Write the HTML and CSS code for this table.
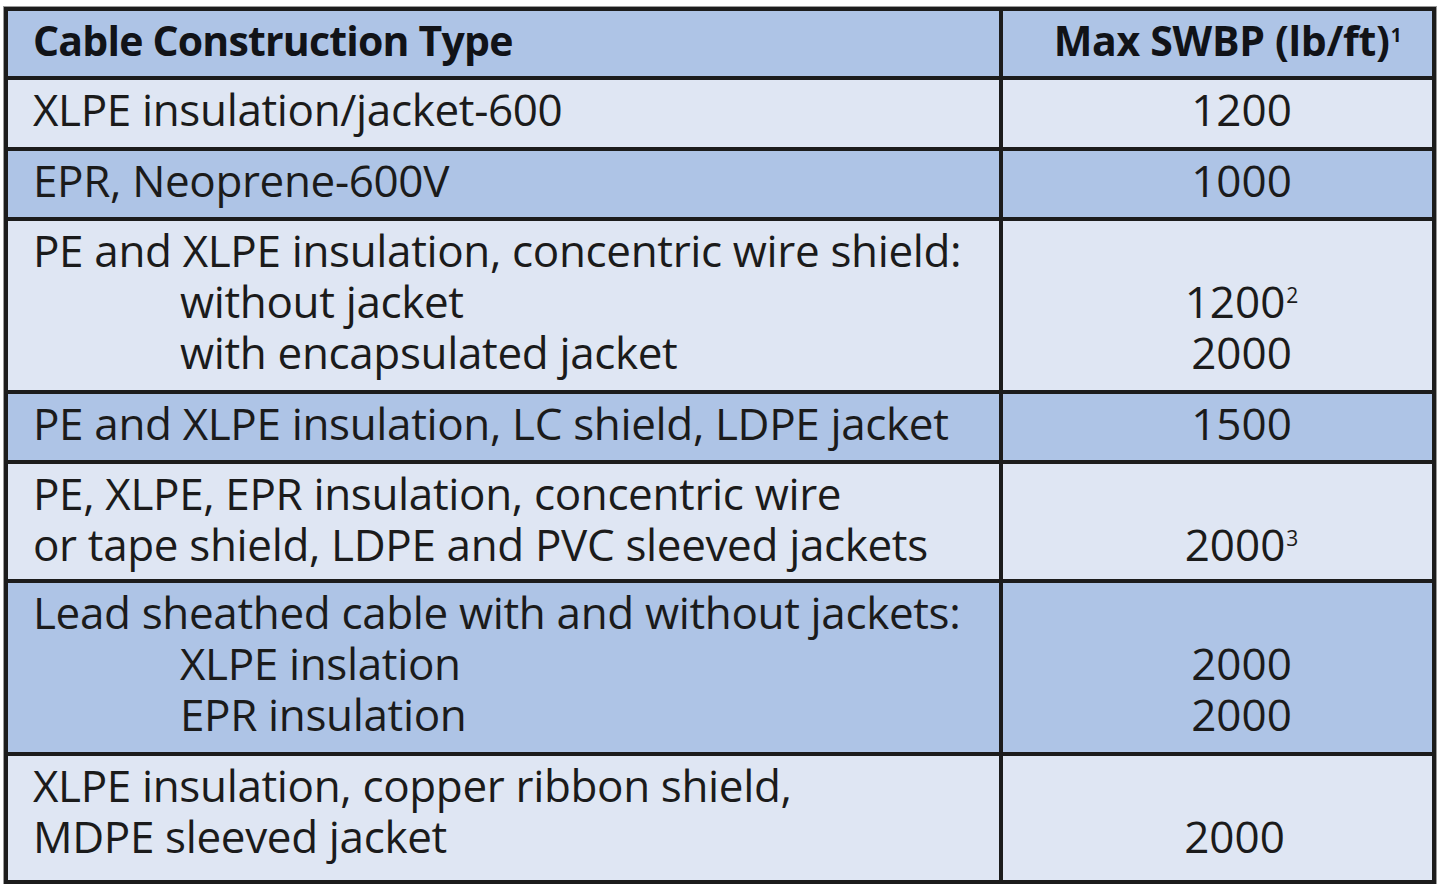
FILE: index.html
```html
<!DOCTYPE html>
<html lang="en">
<head>
<meta charset="utf-8">
<title>Max SWBP by Cable Construction Type</title>
<link rel="stylesheet" href="styles.css">
</head>
<body>
<table class="swbp">
  <colgroup>
    <col class="col-type">
    <col class="col-val">
  </colgroup>
  <thead>
    <tr class="dark">
      <th class="type">Cable Construction Type</th>
      <th class="val">Max SWBP (lb/ft)<span class="sup">1</span></th>
    </tr>
  </thead>
  <tbody>
    <tr class="light">
      <td class="type">XLPE insulation/jacket-600</td>
      <td class="val">1200</td>
    </tr>
    <tr class="dark">
      <td class="type">EPR, Neoprene-600V</td>
      <td class="val">1000</td>
    </tr>
    <tr class="light">
      <td class="type">PE and XLPE insulation, concentric wire shield:<span class="sub">without jacket</span><span class="sub">with encapsulated jacket</span></td>
      <td class="val">1200<span class="sup">2</span><br>2000</td>
    </tr>
    <tr class="dark">
      <td class="type">PE and XLPE insulation, LC shield, LDPE jacket</td>
      <td class="val">1500</td>
    </tr>
    <tr class="light tight">
      <td class="type">PE, XLPE, EPR insulation, concentric wire<br>or tape shield, LDPE and PVC sleeved jackets</td>
      <td class="val">2000<span class="sup">3</span></td>
    </tr>
    <tr class="dark">
      <td class="type">Lead sheathed cable with and without jackets:<span class="sub">XLPE inslation</span><span class="sub">EPR insulation</span></td>
      <td class="val">2000<br>2000</td>
    </tr>
    <tr class="light last">
      <td class="type">XLPE insulation, copper ribbon shield,<br>MDPE sleeved jacket</td>
      <td class="val">2000</td>
    </tr>
  </tbody>
</table>
</body>
</html>
```

FILE: styles.css
```css
html, body {
  margin: 0;
  padding: 0;
  background: #ffffff;
}

body {
  font-family: "Open Sans", "Noto Sans", sans-serif;
  color: #1b1b1b;
}

.swbp {
  border-collapse: collapse;
  table-layout: fixed;
  width: 1432px;
  margin: 7px 0 0 4px;
  box-shadow: 0 0 0 1px #9a9a9a;
}

.col-type {
  width: 995px;
}

.swbp th,
.swbp td {
  border: 4px solid #1c1c1c;
  padding: 4px 25px 11.5px;
  font-size: 44px;
  line-height: 51px;
  font-weight: 400;
  text-align: left;
  vertical-align: top;
}

.swbp .type {
  white-space: nowrap;
  letter-spacing: -0.35px;
}

.swbp th {
  font-size: 41px;
  font-weight: 700;
  color: #111318;
  padding-top: 4px;
  padding-bottom: 10px;
}

.swbp th.type {
  letter-spacing: -0.8px;
}

.dark {
  background: #aec4e6;
}

.light {
  background: #dfe6f3;
}

.swbp .val {
  text-align: center;
  vertical-align: bottom;
  padding-left: 48px;
  padding-right: 0;
}

.swbp th.val {
  padding-left: 20px;
  letter-spacing: -0.3px;
}

.swbp .tight td {
  padding-bottom: 9px;
}

.swbp .last td {
  padding-bottom: 18px;
}

.swbp .last .val {
  padding-left: 34px;
}

.sub {
  display: block;
  padding-left: 147px;
}

.sup {
  font-size: 21px;
  line-height: 0;
  vertical-align: 15px;
  margin-left: 1px;
}

th .sup {
  font-size: 19px;
  vertical-align: 14px;
}
```
